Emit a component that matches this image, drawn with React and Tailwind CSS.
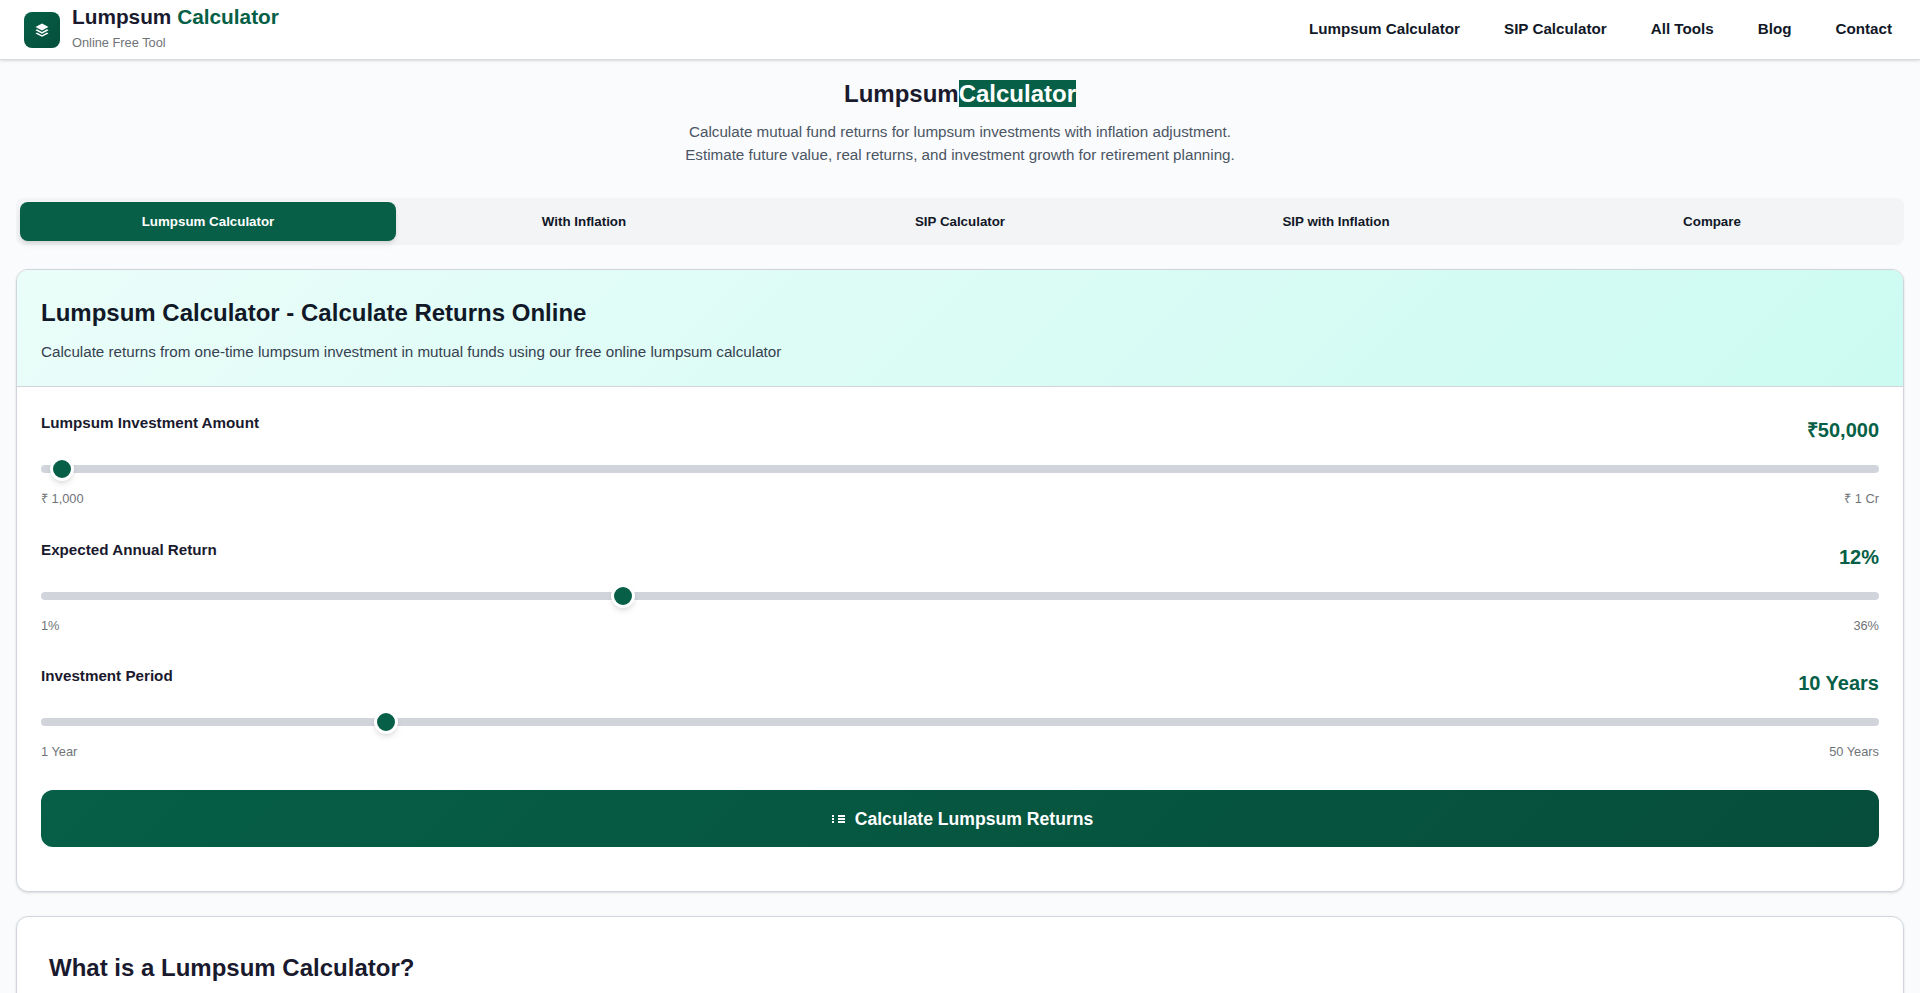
import React from 'react';

const navItems = ['Lumpsum Calculator', 'SIP Calculator', 'All Tools', 'Blog', 'Contact'];
const tabs = ['Lumpsum Calculator', 'With Inflation', 'SIP Calculator', 'SIP with Inflation', 'Compare'];

const sliders = [
    { label: 'Lumpsum Investment Amount', value: '₹50,000', min: '₹ 1,000', max: '₹ 1 Cr', pct: 49000 / 9999000 },
    { label: 'Expected Annual Return', value: '12%', min: '1%', max: '36%', pct: 11 / 35 },
    { label: 'Investment Period', value: '10 Years', min: '1 Year', max: '50 Years', pct: 9 / 49 },
];

const SliderRow = ({ label, value, min, max, pct }) => (
    <div className="h-[126.6px]">
        <div className="flex items-start justify-between">
            <span className="text-[15.2px] leading-6 font-semibold text-[#1a1a2e]">{label}</span>
            <span className="mt-[4px] text-[20px] leading-[30px] font-bold text-[#065f46]">{value}</span>
        </div>
        {/* Track */}
        <div className="relative mt-[20px] h-2 rounded-full bg-[#d1d5db]">
            <div
                className="absolute top-1/2 h-[24px] w-[24px] -translate-x-1/2 -translate-y-1/2 rounded-full border-[3px] border-white bg-[#065f46] shadow-md"
                style={{ left: `calc(12px + ${pct} * (100% - 24px))` }}
            />
        </div>
        <div className="mt-[16px] flex justify-between text-[12.8px] leading-5 text-[#707378]">
            <span>{min}</span>
            <span>{max}</span>
        </div>
    </div>
);

const App = () => {
    return (
        <div className="h-[993px] overflow-hidden bg-[#fafbfd] font-['Liberation_Sans',Arial,sans-serif] text-[#111827]">
            {/* Header */}
            <header className="flex h-[60px] items-center justify-between border-b border-[#d8dbe0] bg-white pr-[28px] pl-[24px] shadow-sm">
                <div className="flex items-center gap-3">
                    <div className="flex h-9 w-9 items-center justify-center rounded-lg bg-[linear-gradient(135deg,#065f46,#064e3b)]">
                        <svg width="14" height="14" viewBox="0 0 14 14" fill="white">
                            <path d="M7 0.5 13.5 4 7 7.5 0.5 4Z" />
                            <path d="M2 6.3 7 9 12 6.3 13.5 7.2 7 10.7 0.5 7.2Z" />
                            <path d="M2 9.6 7 12.3 12 9.6 13.5 10.4 7 13.7 0.5 10.4Z" />
                        </svg>
                    </div>
                    <div className="-mt-[5px]">
                        <div className="text-[20.8px] leading-[30px] font-bold text-[#1a1a2e]">
                            Lumpsum <span className="text-[#065f46]">Calculator</span>
                        </div>
                        <div className="mt-[1px] text-[12.8px] leading-5 text-[#707378]">Online Free Tool</div>
                    </div>
                </div>
                <nav className="-mt-[2px] flex items-center gap-[44px]">
                    {navItems.map(item => (
                        <a key={item} className="text-[15.2px] leading-6 font-semibold text-[#111827]">{item}</a>
                    ))}
                </nav>
            </header>

            {/* Hero */}
            <div className="flex flex-col items-center pt-[20px]">
                <h1 className="flex text-[24px] leading-[27px] font-bold text-[#1a1a2e]">
                    <span>Lumpsum</span>
                    <span className="bg-[#065f46] text-white">Calculator</span>
                </h1>
                <p className="mt-[14px] text-center text-[15.2px] leading-[22.8px] text-[#4b5563]">
                    Calculate mutual fund returns for lumpsum investments with inflation adjustment.
                    <br />
                    Estimate future value, real returns, and investment growth for retirement planning.
                </p>
            </div>

            <div className="px-4">
                {/* Tabs */}
                <div className="mt-[31px] grid grid-cols-5 rounded-lg bg-[#f3f4f6] p-1">
                    {tabs.map((tab, i) => (
                        <div
                            key={tab}
                            className={`flex h-[39px] items-center justify-center rounded-lg pt-px text-[13.33px] font-semibold ${i === 0 ? 'bg-[#065f46] text-white shadow-md' : 'text-[#111827]'}`}
                        >
                            {tab}
                        </div>
                    ))}
                </div>

                {/* Calculator card */}
                <div className="mt-[24px] overflow-hidden rounded-xl border border-[#d1d5db] bg-white shadow-sm">
                    <div className="h-[117px] border-b border-[#d1d5db] bg-[linear-gradient(135deg,#eafdf9,#ccfbf1)] px-6 pt-[25px]">
                        <h2 className="text-[24px] leading-[36px] font-bold text-[#111827]">Lumpsum Calculator - Calculate Returns Online</h2>
                        <p className="mt-[10px] text-[15.2px] leading-[22.8px] text-[#374151]">
                            Calculate returns from one-time lumpsum investment in mutual funds using our free online lumpsum calculator
                        </p>
                    </div>
                    <div className="h-[504px] px-6 pt-[24.4px]">
                        {sliders.map(s => (
                            <SliderRow key={s.label} {...s} />
                        ))}
                        <button className="-mt-[0.5px] flex h-[57px] w-full items-center justify-center gap-[10px] rounded-xl bg-[linear-gradient(135deg,#065f46,#064e3b)] pl-[5px] text-[17.6px] font-semibold text-white">
                            <svg width="13" height="8" viewBox="0 0 13 8" fill="white">
                                <rect x="0" y="0" width="2" height="2" />
                                <rect x="0" y="3" width="2" height="2" />
                                <rect x="0" y="6" width="2" height="2" />
                                <rect x="6" y="0" width="7" height="2" />
                                <rect x="6" y="3" width="7" height="2" />
                                <rect x="6" y="6" width="7" height="2" />
                            </svg>
                            Calculate Lumpsum Returns
                        </button>
                    </div>
                </div>

                {/* Info card */}
                <div className="mt-[24px] h-[300px] rounded-xl border border-[#d1d5db] bg-white px-[32px] pt-[33px] shadow-sm">
                    <h2 className="text-[24px] leading-[36px] font-bold text-[#1a1a2e]">What is a Lumpsum Calculator?</h2>
                </div>
            </div>
        </div>
    );
};

export default App;
